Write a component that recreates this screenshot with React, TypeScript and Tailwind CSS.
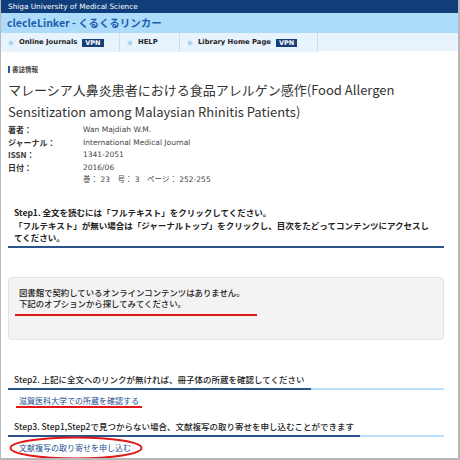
import React from 'react';

const NAV = [
  { label: 'Online Journals', vpn: true, w: 'w-[119px]' },
  { label: 'HELP', vpn: false, w: 'w-[60px]' },
  { label: 'Library Home Page', vpn: true, w: 'w-[138px]' },
];

const META = [
  { k: '著者：', v: 'Wan Majdiah W.M.' },
  { k: 'ジャーナル：', v: 'International Medical Journal' },
  { k: 'ISSN：', v: '1341-2051' },
  { k: '日付：', v: '2016/06' },
  { k: '', v: '巻： 23　号： 3　ページ： 252-255' },
];

const jp = { fontFamily: '"Noto Sans CJK JP", "DejaVu Sans", sans-serif' };
const vd = { fontFamily: '"DejaVu Sans", "Noto Sans CJK JP", sans-serif' };

function StepHeading({ children }: { children: React.ReactNode }) {
  return (
    <div className="flex border-b-2 border-[#b9e0fb]">
      <span className="px-[6px] pb-[3px] -mb-[2px] border-b-2 border-[#2b5589] text-[8.5px] leading-[12px] font-medium text-[#222]">
        {children}
      </span>
    </div>
  );
}

export default function App() {
  return (
    <div className="w-[460px] h-[460px] bg-white border-l border-r-2 border-b-2 border-[#b8b8b8] overflow-hidden" style={jp}>
      <div className="h-[13px] bg-[#0f3e7b] text-white text-[7.3px] leading-[13px] pl-[7px]" style={vd}>
        Shiga University of Medical Science
      </div>
      <div className="h-[20px] bg-[#addcfb] text-[#1c5cab] font-bold text-[10.5px] leading-[20px] pl-[6px]">
        clecleLinker - くるくるリンカー
      </div>
      <div className="h-[18px] bg-[#e7f4fe] flex" style={vd}>
        {NAV.map((n) => (
          <div key={n.label} className={`${n.w} h-[19px] flex items-center gap-[5px] pl-[7px] border-r border-[#bfe0f6] bg-[#e7f4fe]`}>
            <span className="w-[6px] h-[6px] rounded-full bg-[#a9d4f1] border border-[#d6ecfb]" />
            <span className="text-[6.8px] font-bold text-[#222]">{n.label}</span>
            {n.vpn && (
              <span className="bg-[#173f77] text-white text-[6.5px] font-bold leading-[8px] px-[3px]">VPN</span>
            )}
          </div>
        ))}
      </div>

      <div className="pl-[7px] pr-[14px]">
        <div className="mt-[14px] flex items-center gap-[2px]">
          <span className="w-[2px] h-[7px] bg-[#1c5cab]" />
          <span className="text-[6.5px] font-bold text-[#444]">書誌情報</span>
        </div>
        <h1 className="mt-[4px] text-[13px] leading-[22px] text-[#333]">
          マレーシア人鼻炎患者における食品アレルゲン感作(Food Allergen Sensitization among Malaysian Rhinitis Patients)
        </h1>
        <div className="mt-[1px]">
          {META.map((m, i) => (
            <div key={i} className="flex h-[12.5px] items-center">
              <span className="w-[75px] text-[8px] font-bold text-[#333]">{m.k}</span>
              <span className="text-[7.5px] text-[#444]" style={vd}>{m.v}</span>
            </div>
          ))}
        </div>

        <div className="mt-[20px] border-b-2 border-[#2b5589] pl-[6px] pr-[8px] pb-[2px] text-[8.5px] leading-[12.5px] font-bold text-[#222]">
          Step1. 全文を読むには「フルテキスト」をクリックしてください。<br />
          「フルテキスト」が無い場合は「ジャーナルトップ」をクリックし、目次をたどってコンテンツにアクセスしてください。
        </div>

        <div className="mt-[29px] h-[63px] bg-[#f3f3f3] border border-[#e3e3e3] rounded-[4px] pl-[6px] pt-[9px] flex items-start">
          <div className="text-[8.4px] leading-[11px] font-medium text-[#222] border-b-2 border-[#e01818] pb-[5px] pl-[4px] pr-[12px]">
            図書館で契約しているオンラインコンテンツはありません。<br />
            下記のオプションから探してみてください。
          </div>
        </div>

        <div className="mt-[33px]">
          <StepHeading>Step2. 上記に全文へのリンクが無ければ、冊子体の所蔵を確認してください</StepHeading>
        </div>
        <div className="mt-[5px] pl-[8px] flex">
          <span className="text-[8px] leading-[11px] text-[#1a4e8f] border-b-2 border-[#e01818] px-[3px]">
            滋賀医科大学での所蔵を確認する
          </span>
        </div>

        <div className="mt-[12px]">
          <StepHeading>Step3. Step1,Step2で見つからない場合、文献複写の取り寄せを申し込むことができます</StepHeading>
        </div>
        <div className="mt-[5px] pl-[11px] relative flex">
          <span className="text-[8px] leading-[11px] text-[#1a4e8f]">文献複写の取り寄せを申し込む</span>
          <svg className="absolute left-[1px] -top-[6px]" width="134" height="24" viewBox="0 0 134 24">
            <ellipse cx="67" cy="12" rx="65.5" ry="10.5" fill="none" stroke="#e01818" strokeWidth="2" />
          </svg>
        </div>
      </div>
    </div>
  );
}
